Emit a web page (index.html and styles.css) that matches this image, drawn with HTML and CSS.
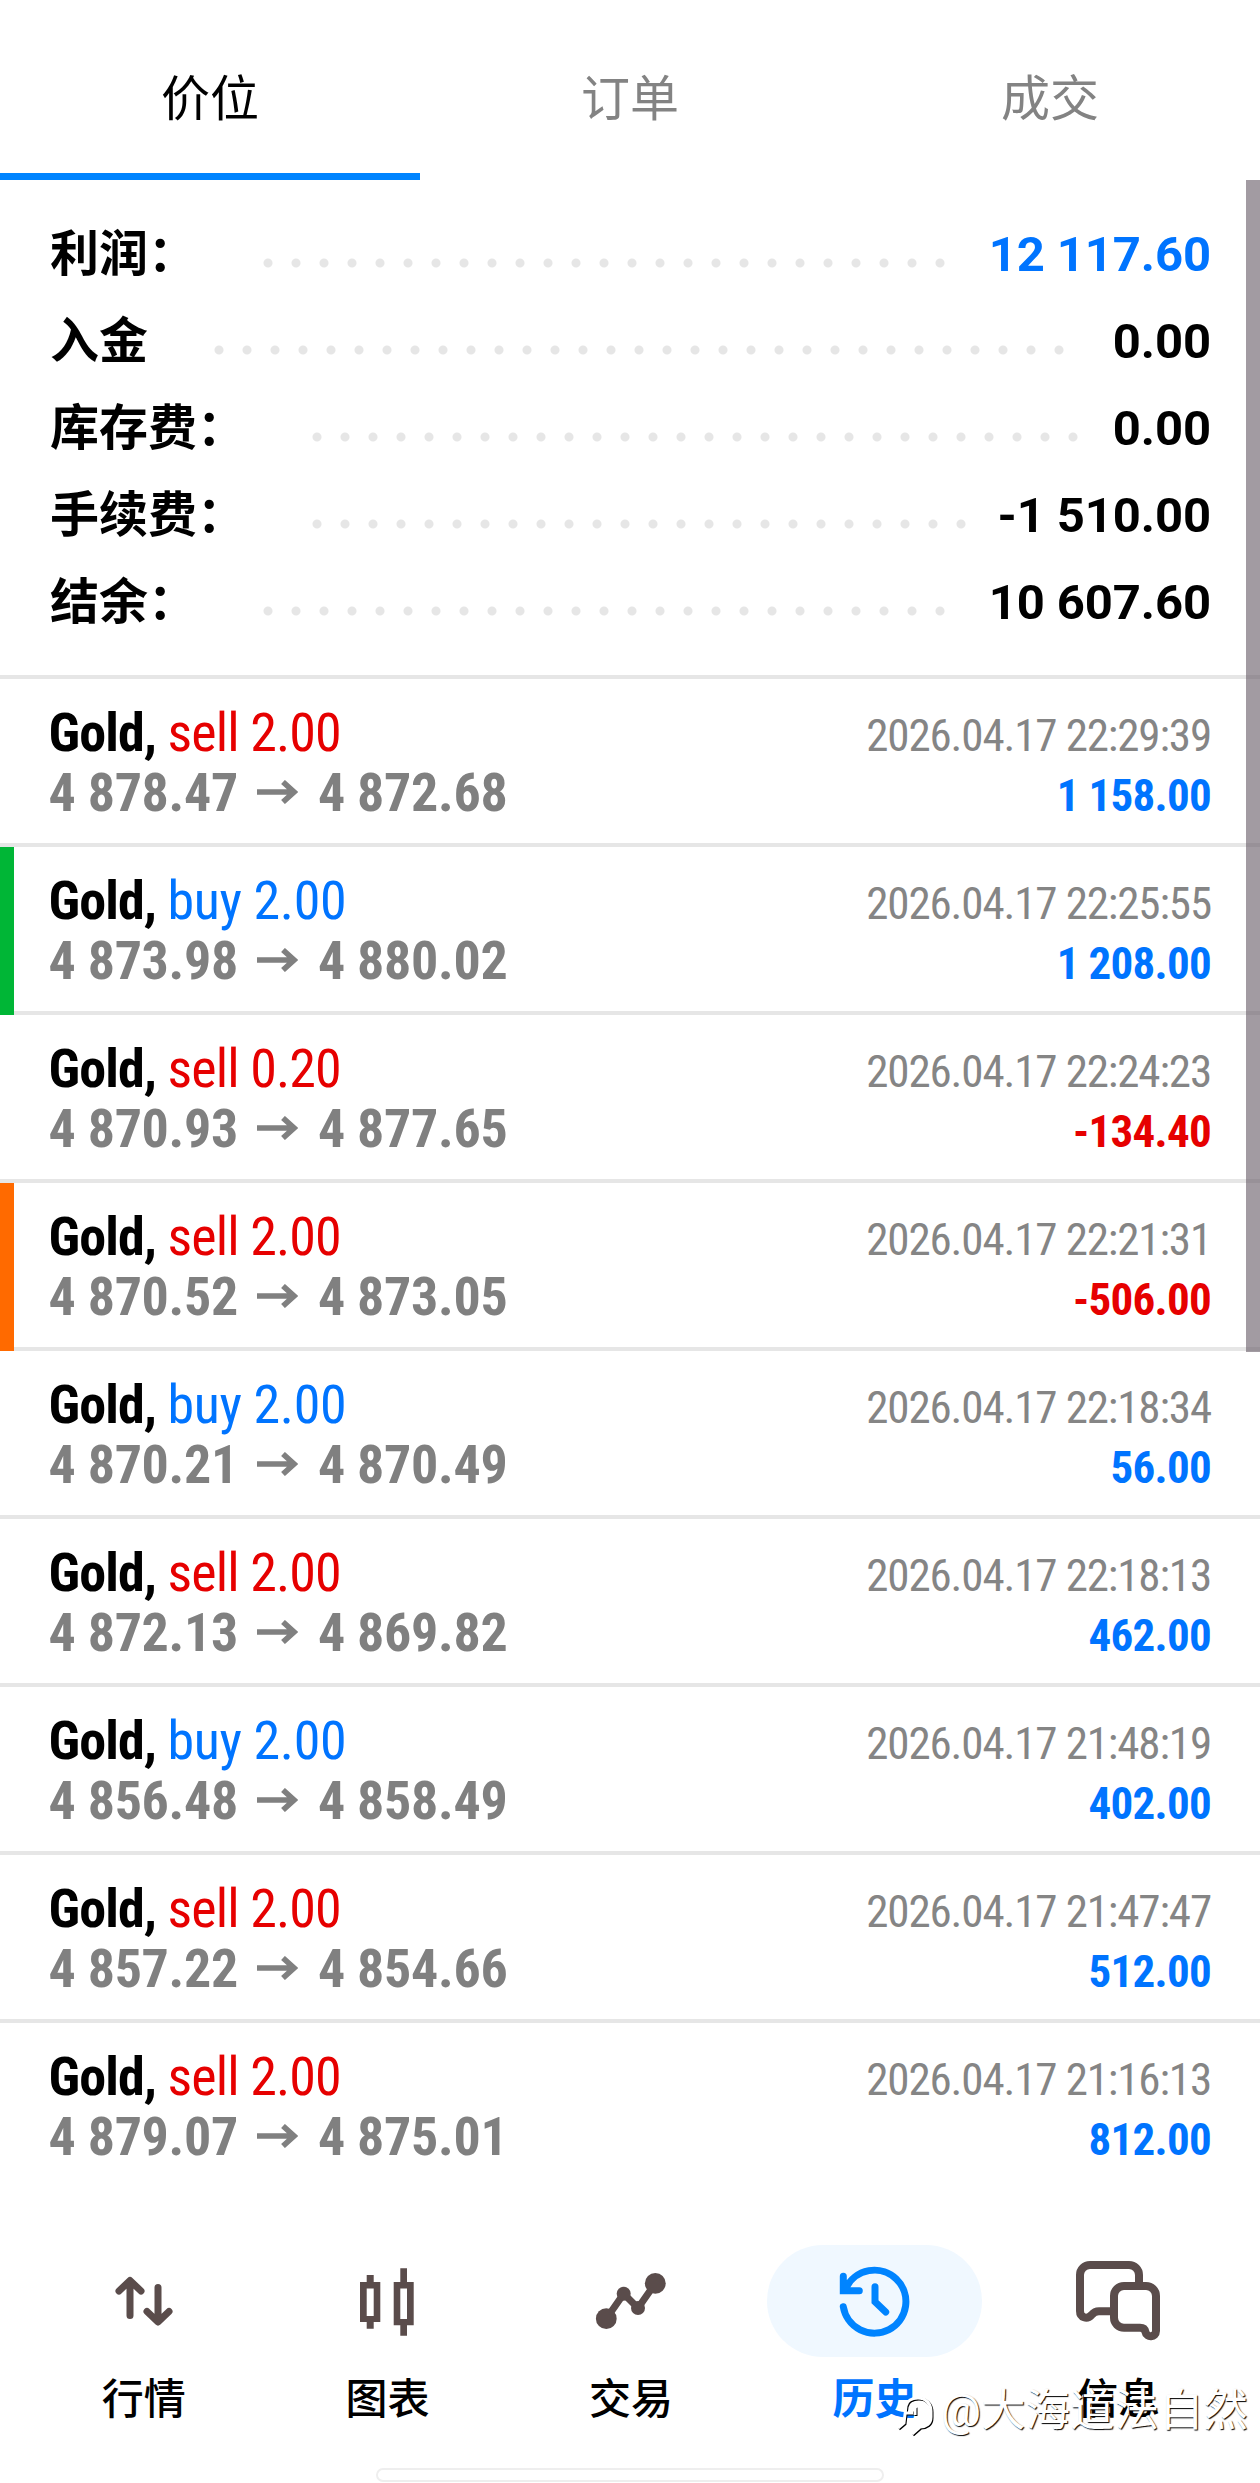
FILE: index.html
```html
<!DOCTYPE html>
<html lang="zh-CN">
<head>
<meta charset="utf-8">
<title>历史</title>
<link rel="stylesheet" href="styles.css">
</head>
<body>
<svg class="defs" aria-hidden="true">
  <symbol id="arrow" viewBox="0 0 41 24"><path d="M0 12H37M26 2L37 12L26 22" fill="none" stroke="currentColor" stroke-width="5.6"/></symbol>
</svg>
<div class="app">
  <div class="tabs">
    <div class="tab active">价位</div>
    <div class="tab">订单</div>
    <div class="tab">成交</div>
  </div>
  <main class="history">
    <section class="summary">
      <div class="sum"><span class="label">利润：</span><i class="dots" style="--n:25"></i><span class="value up">12 117.60</span></div>
      <div class="sum"><span class="label">入金</span><i class="dots" style="--n:31"></i><span class="value">0.00</span></div>
      <div class="sum"><span class="label">库存费：</span><i class="dots" style="--n:28"></i><span class="value">0.00</span></div>
      <div class="sum"><span class="label">手续费：</span><i class="dots" style="--n:24"></i><span class="value">-1 510.00</span></div>
      <div class="sum"><span class="label">结余：</span><i class="dots" style="--n:25"></i><span class="value">10 607.60</span></div>
    </section>
    <section class="deals">
      <article class="deal">
        <div class="line"><span class="name"><b>Gold,</b> <span class="down">sell 2.00</span></span><time>2026.04.17 22:29:39</time></div>
        <div class="line"><span class="price">4 878.47<svg class="to"><use href="#arrow"/></svg>4 872.68</span><span class="profit up">1 158.00</span></div>
      </article>
      <article class="deal tp">
        <div class="line"><span class="name"><b>Gold,</b> <span class="up">buy 2.00</span></span><time>2026.04.17 22:25:55</time></div>
        <div class="line"><span class="price">4 873.98<svg class="to"><use href="#arrow"/></svg>4 880.02</span><span class="profit up">1 208.00</span></div>
      </article>
      <article class="deal">
        <div class="line"><span class="name"><b>Gold,</b> <span class="down">sell 0.20</span></span><time>2026.04.17 22:24:23</time></div>
        <div class="line"><span class="price">4 870.93<svg class="to"><use href="#arrow"/></svg>4 877.65</span><span class="profit down">-134.40</span></div>
      </article>
      <article class="deal sl">
        <div class="line"><span class="name"><b>Gold,</b> <span class="down">sell 2.00</span></span><time>2026.04.17 22:21:31</time></div>
        <div class="line"><span class="price">4 870.52<svg class="to"><use href="#arrow"/></svg>4 873.05</span><span class="profit down">-506.00</span></div>
      </article>
      <article class="deal">
        <div class="line"><span class="name"><b>Gold,</b> <span class="up">buy 2.00</span></span><time>2026.04.17 22:18:34</time></div>
        <div class="line"><span class="price">4 870.21<svg class="to"><use href="#arrow"/></svg>4 870.49</span><span class="profit up">56.00</span></div>
      </article>
      <article class="deal">
        <div class="line"><span class="name"><b>Gold,</b> <span class="down">sell 2.00</span></span><time>2026.04.17 22:18:13</time></div>
        <div class="line"><span class="price">4 872.13<svg class="to"><use href="#arrow"/></svg>4 869.82</span><span class="profit up">462.00</span></div>
      </article>
      <article class="deal">
        <div class="line"><span class="name"><b>Gold,</b> <span class="up">buy 2.00</span></span><time>2026.04.17 21:48:19</time></div>
        <div class="line"><span class="price">4 856.48<svg class="to"><use href="#arrow"/></svg>4 858.49</span><span class="profit up">402.00</span></div>
      </article>
      <article class="deal">
        <div class="line"><span class="name"><b>Gold,</b> <span class="down">sell 2.00</span></span><time>2026.04.17 21:47:47</time></div>
        <div class="line"><span class="price">4 857.22<svg class="to"><use href="#arrow"/></svg>4 854.66</span><span class="profit up">512.00</span></div>
      </article>
      <article class="deal">
        <div class="line"><span class="name"><b>Gold,</b> <span class="down">sell 2.00</span></span><time>2026.04.17 21:16:13</time></div>
        <div class="line"><span class="price">4 879.07<svg class="to"><use href="#arrow"/></svg>4 875.01</span><span class="profit up">812.00</span></div>
      </article>
    </section>
    <div class="scrollbar"></div>
  </main>
  <nav class="nav">
    <div class="item">
      <div class="pill"><svg class="icon" viewBox="0 0 80 80"><path class="s7 round" d="M15 30L26 19.5L37 30M26 20V54.5M43 50.5L54 61L65 50.5M54 26.5V60"/></svg></div>
      <span>行情</span>
    </div>
    <div class="item">
      <div class="pill"><svg class="icon" viewBox="0 0 80 80"><path fill="currentColor" fill-rule="evenodd" d="M19.7 14h7v7h6.6v40h-6.6v6.7h-7V61H13V21h6.7zM19.7 27.5V55h7V27.5zM53.3 7.3H60V21h6.7v43.3H60v10.4h-6.7V64.3h-6.6V21h6.6zM53.3 27.5V58H60V27.5z"/></svg></div>
      <span>图表</span>
    </div>
    <div class="item">
      <div class="pill"><svg class="icon" viewBox="0 0 80 80"><path class="s7" d="M15.3 57.7L32.7 32.7L47 47L64.3 22.3"/><g fill="currentColor"><circle cx="15.3" cy="57.7" r="10.4"/><circle cx="32.7" cy="32.7" r="7"/><circle cx="47" cy="47" r="7"/><circle cx="64.3" cy="22.3" r="10.4"/></g></svg></div>
      <span>交易</span>
    </div>
    <div class="item active">
      <div class="pill"><svg class="icon" viewBox="0 0 80 80"><path class="s7 cap" d="M8.3 45.7A31.5 31.5 0 1 0 11 27M8.3 15.3V29.7H24.3M40 25.8V40.7L50.7 51"/></svg></div>
      <span>历史</span>
    </div>
    <div class="item">
      <div class="pill"><svg class="icon" viewBox="0 0 80 80"><path class="s8" d="M61 24V14a10 10 0 0 0-10-10H12A10 10 0 0 0 2 14V50C2 56.5 9 59 13.5 54C16 51 18.5 50.2 21 50.2H36M46 25H68a10 10 0 0 1 10 10V70C78 76.5 68.5 77 67.5 71C67 68.5 65.5 66.8 62 66.8H46a10 10 0 0 1-10-10V35a10 10 0 0 1 10-10z"/></svg></div>
      <span>信息</span>
    </div>
  </nav>
  <div class="home"></div>
  <div class="watermark"><svg viewBox="0 0 40 44"><path d="M3 35L9 30L11 13C12 8 17 5 23 5C31 5 36 11 36 18V24C36 31 31 34 25 34L17 41M14 19L20 16V22M9 20H18" fill="none" stroke="#fff" stroke-width="3"/></svg><span>@大海道法自然</span></div>
</div>
</body>
</html>
```
FILE: styles.css
```css
* { box-sizing: border-box; }
body {
  margin: 0;
  background: #fff;
  color: #000;
  font-family: Roboto, "Noto Sans CJK SC", sans-serif;
}
.defs { display: none; }
.app {
  position: relative;
  width: 1260px;
  height: 2483px;
  overflow: hidden;
  display: flex;
  flex-direction: column;
}
.up { color: #0074ff; }
.down { color: #e60000; }

.tabs { display: flex; height: 180px; }
.tab {
  flex: 1;
  padding-top: 55px;
  border-bottom: 7px solid transparent;
  text-align: center;
  font: 49px/80px "Noto Sans CJK SC", sans-serif;
  color: #838383;
}
.tab.active { color: #000; border-color: #0084ff; }

.history { position: relative; height: 2065px; }
.scrollbar {
  position: absolute;
  top: 0;
  right: 0;
  width: 14px;
  height: 1172px;
  background: rgba(95, 83, 95, .58);
}
.summary {
  padding: 26px 49px 34px 50px;
  border-bottom: 4px solid #e6e6e6;
}
.sum {
  display: flex;
  align-items: baseline;
  height: 87px;
  line-height: 87px;
  font-size: 49px;
  font-weight: 700;
}
.label { font-family: "Noto Sans CJK SC", sans-serif; }
.dots {
  align-self: flex-start;
  width: calc(var(--n) * 28px);
  height: 12px;
  margin: 51px 0 0 57px;
  background: radial-gradient(circle at 14px 6px, #e6e6e6 4px, transparent 5px) 0 0 / 28px 12px;
}
.value { margin-left: auto; white-space: pre; letter-spacing: -.1px; }

.deal {
  height: 168px;
  padding: 24px 49px 0 48.5px;
  background: linear-gradient(#e6e6e6, #e6e6e6) bottom / 100% 4px no-repeat;
}
.deal:last-child { background: none; }
.tp { box-shadow: inset 14px 0 #00b636; }
.sl { box-shadow: inset 14px 0 #ff6a00; }
.line {
  display: flex;
  justify-content: space-between;
  align-items: baseline;
  height: 60px;
  font: 54px/60px "Roboto Condensed", Roboto, sans-serif;
}
.name { letter-spacing: -.9px; }
.name .up { letter-spacing: -.4px; }
.price { color: #808080; font-weight: 700; letter-spacing: -.3px; }
.to { width: 41px; height: 24px; margin: 0 20px 7px 19px; }
time { font-size: 45px; color: #858585; letter-spacing: -1.12px; }
.profit { font-size: 45px; font-weight: 700; letter-spacing: -.7px; }

.nav { display: flex; padding: 0 20px 0 22px; }
.item {
  flex: 1;
  display: flex;
  flex-direction: column;
  align-items: center;
  font: 500 42px/60px "Noto Sans CJK SC", sans-serif;
}
.item span { margin-top: 9px; }
.pill {
  display: grid;
  place-items: center;
  width: 215px;
  height: 112px;
  border-radius: 56px;
  color: #5a4c4b;
}
.active .pill { background: #f0f8ff; color: #0084ff; }
.item.active { color: #0074ff; font-weight: 700; }
.icon { width: 80px; height: 80px; overflow: visible; }
.s7, .s8 { fill: none; stroke: currentColor; stroke-width: 7; }
.s8 { stroke-width: 8; }
.round { stroke-linecap: round; stroke-linejoin: round; }
.cap { stroke-linecap: round; }

.home {
  width: 508px;
  height: 14px;
  margin: 42px auto 0;
  border: 2px solid #eee;
  border-radius: 7px;
}
.watermark {
  position: absolute;
  left: 895px;
  top: 2381px;
  display: flex;
  align-items: center;
  gap: 6px;
  white-space: nowrap;
  color: #fff;
  font: 44.5px/60px Roboto, "Noto Sans CJK SC", sans-serif;
  text-shadow: 1px 1px 1px #000;
}
.watermark svg { width: 40px; height: 44px; margin-top: 8px; filter: drop-shadow(1px 1px .5px #000); }
```
